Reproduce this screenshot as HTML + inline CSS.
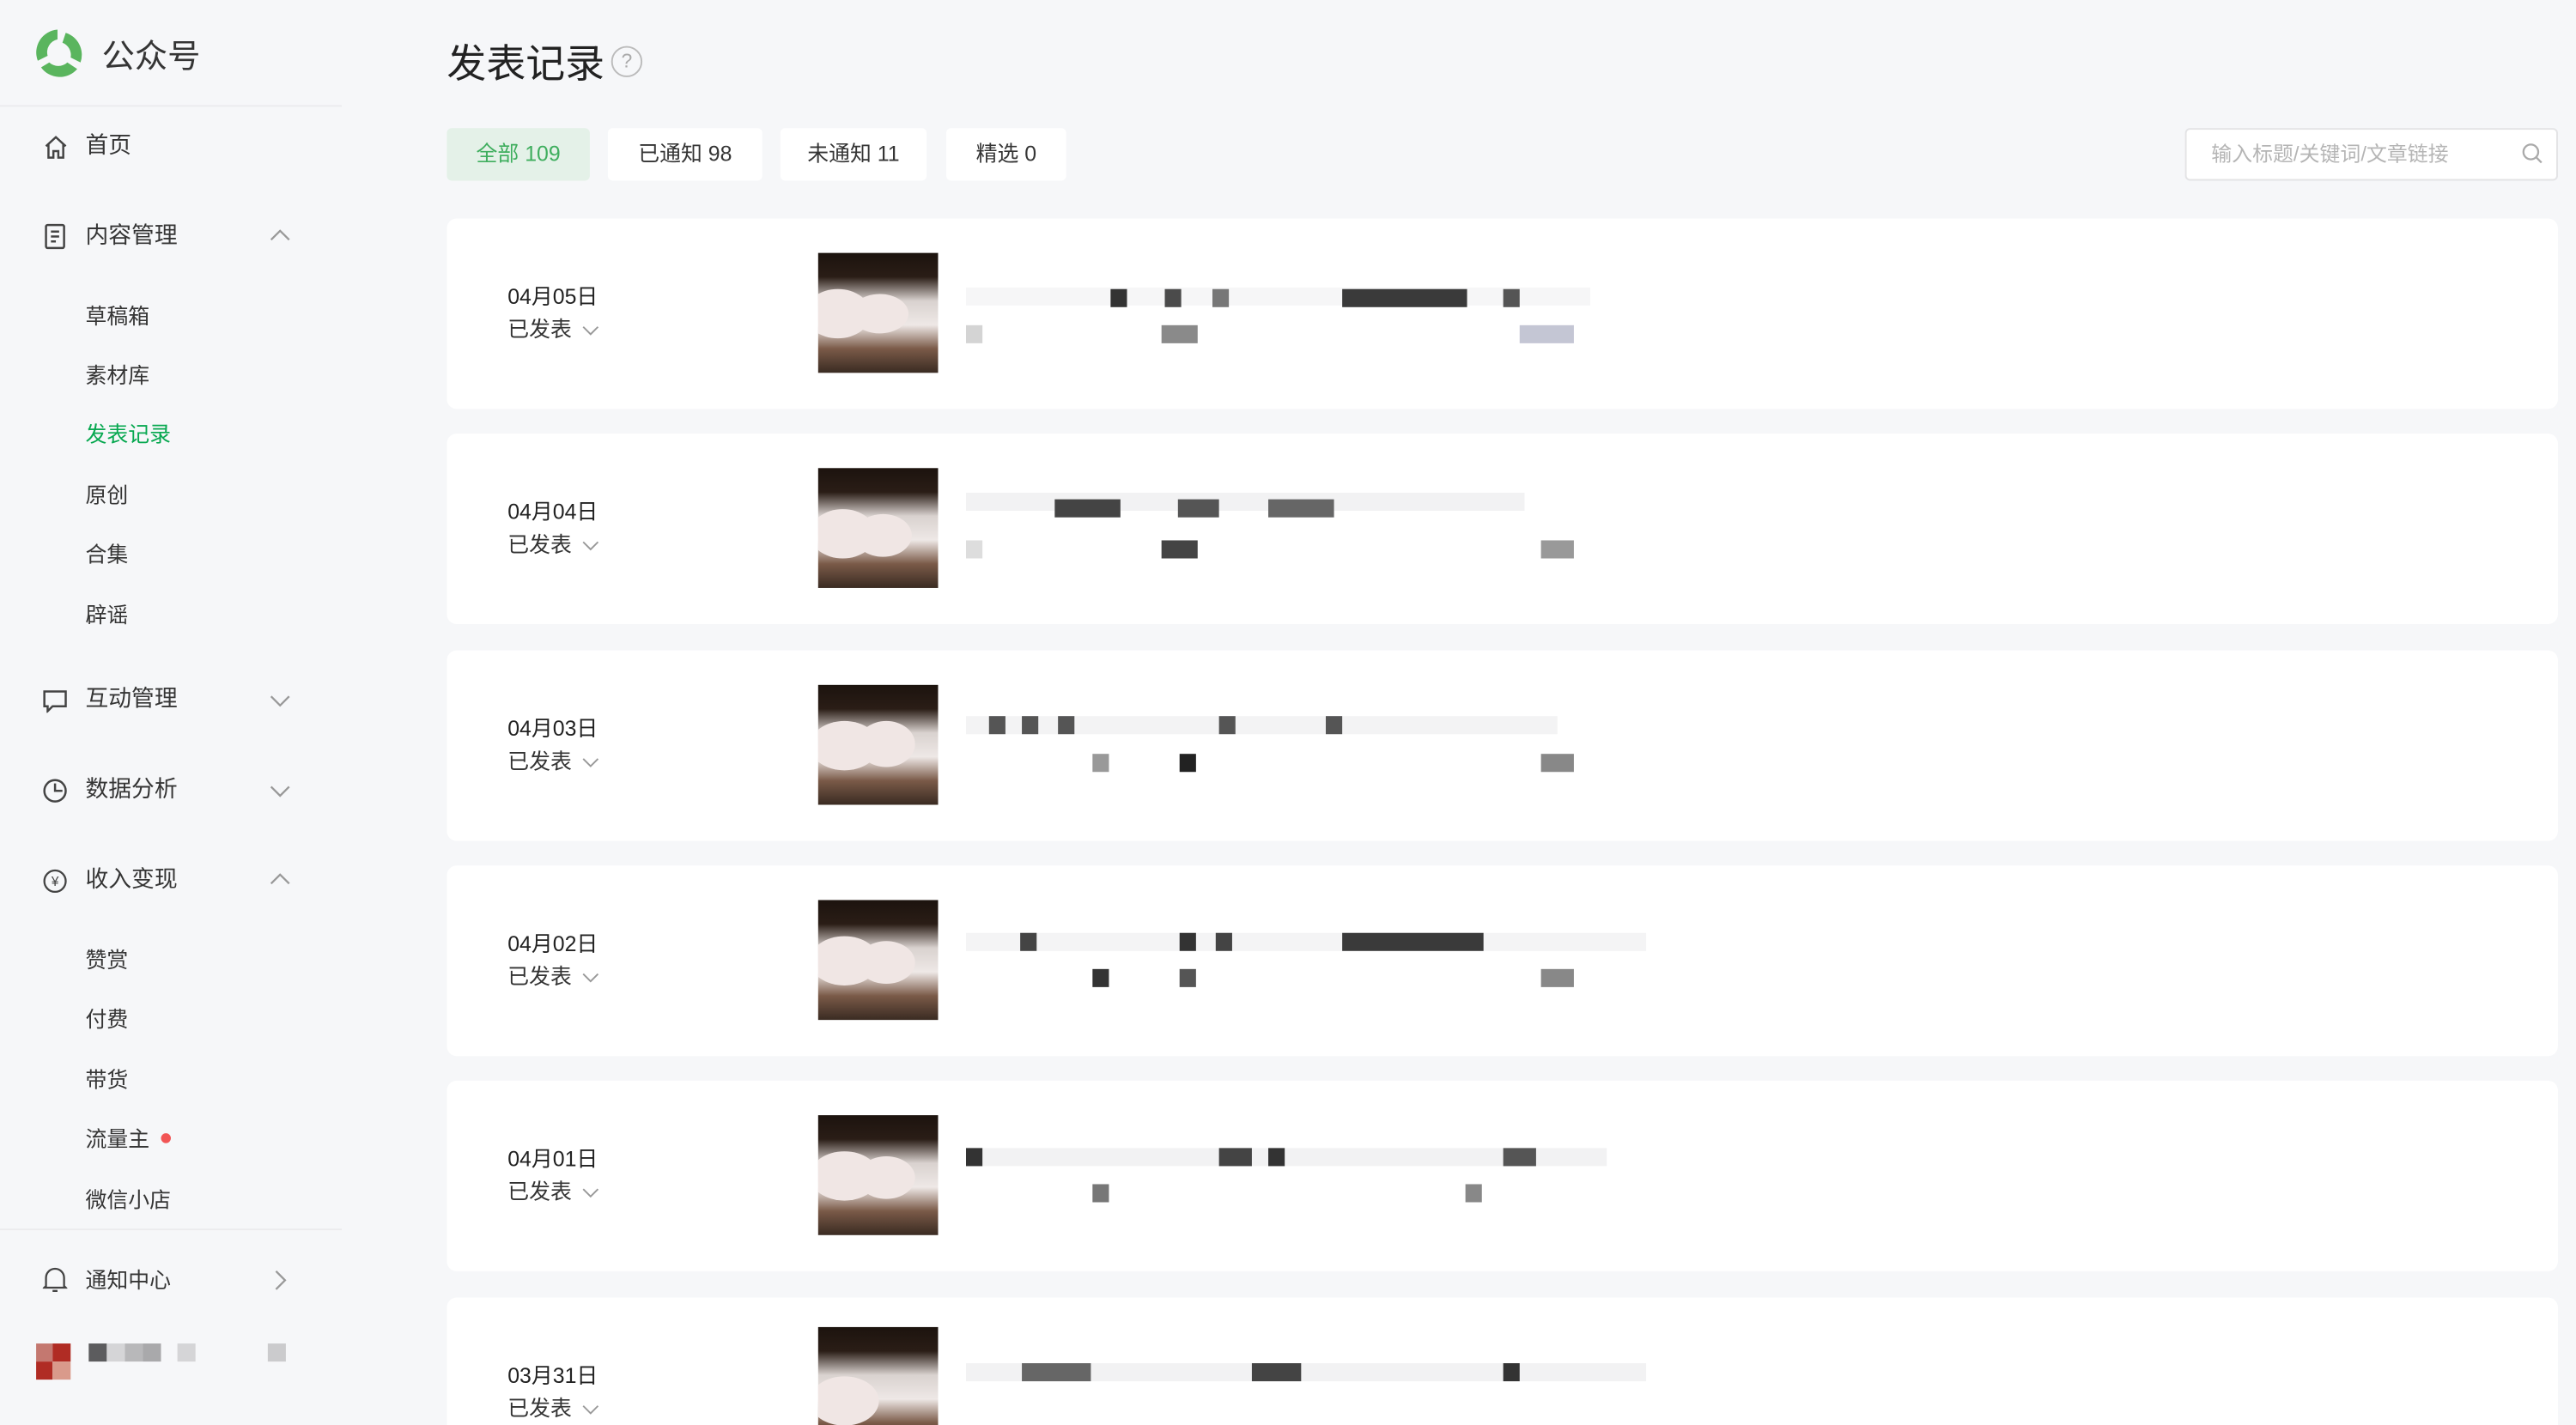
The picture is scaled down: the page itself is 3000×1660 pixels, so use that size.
<!DOCTYPE html>
<html><head><meta charset="utf-8">
<style>
*{margin:0;padding:0;box-sizing:border-box}
html,body{width:3000px;height:1660px;overflow:hidden;background:#f6f7f9}
#w{width:1568px;height:868px;transform:scale(1.91327);transform-origin:0 0;position:relative;font-family:"Liberation Sans","Noto Sans CJK SC",sans-serif;color:#333}
.a{position:absolute;white-space:nowrap}
.nav{font-size:14px;color:#353535;margin-top:-2px}
.sub{font-size:13px;color:#353535;margin-top:-2px}
.hr{position:absolute;left:0;width:208px;height:1px;background:#ececee}
.tab{position:absolute;top:78px;height:32px;line-height:32px;background:#fff;border-radius:3px;font-size:13px;text-align:center;color:#353535}
.card{position:absolute;left:272px;width:1285px;height:116px;background:#fff;border-radius:6px}
.date{position:absolute;left:37px;top:37px;font-size:13px;color:#222}
.st{position:absolute;left:37px;top:57px;font-size:13px;color:#333}
.st svg{vertical-align:middle;margin-left:6px}
.th{position:absolute;left:226px;top:21px;width:73px;height:73px;background:linear-gradient(180deg,#1c130e 0%,#2a1d16 20%,#d9d2cf 40%,#eee8e6 60%,#7a5a48 80%,#3a2b22 100%);overflow:hidden}
.th i{position:absolute;border-radius:50%;background:#f0e6e4}
.m{position:absolute;height:11px}
.card .m:first-of-type{background:#f9f9fa!important}
</style></head><body><div id="w">
<svg class="a" style="left:20px;top:17px" width="31" height="31" viewBox="0 0 31 31"><path d="M15 1 A14 14 0 0 0 3 20 L9 17 A8 8 0 0 1 15 7Z" fill="#5ab55e"/><path d="M20 3 A14 14 0 0 1 29 21 L23 18 A8 8 0 0 0 18 9Z" fill="#5ab55e"/><path d="M5 24 A14 14 0 0 0 27 25 L21 21 A8 8 0 0 1 10 21Z" fill="#5ab55e"/><circle cx="15.5" cy="15.5" r="6" fill="#f6f7f9"/></svg>
<div class="a" style="left:62px;top:18px;font-size:20px;color:#353535">公众号</div>
<div class="hr" style="top:64px"></div>
<svg class="a" style="left:26px;top:82px" width="16" height="15" viewBox="0 0 16 15" fill="none" stroke="#444" stroke-width="1.3"><path d="M2 7 L8 1.5 L14 7 M3.5 6 V14 H6.5 V10 H9.5 V14 H12.5 V6"/></svg>
<div class="a nav" style="left:52px;top:80px">首页</div>
<svg class="a" style="left:27px;top:136px" width="13" height="16" viewBox="0 0 13 16" fill="none" stroke="#444" stroke-width="1.3"><rect x="1" y="1" width="11" height="14" rx="1"/><path d="M4 5h5M4 8h5M4 11h3"/></svg>
<div class="a nav" style="left:52px;top:135px">内容管理</div>
<svg class="a" style="left:164px;top:139px" width="13" height="8" viewBox="0 0 13 8" fill="none" stroke="#999" stroke-width="1.2"><path d="M1 7 L6.5 1.5 L12 7"/></svg>
<div class="a sub" style="left:52px;top:184px">草稿箱</div>
<div class="a sub" style="left:52px;top:220px">素材库</div>
<div class="a sub" style="left:52px;top:256px;color:#07a850">发表记录</div>
<div class="a sub" style="left:52px;top:293px">原创</div>
<div class="a sub" style="left:52px;top:329px">合集</div>
<div class="a sub" style="left:52px;top:366px">辟谣</div>
<svg class="a" style="left:26px;top:420px" width="15" height="14" viewBox="0 0 15 14" fill="none" stroke="#444" stroke-width="1.3"><path d="M1 1h13v9H6l-3 3v-3H1z"/></svg>
<div class="a nav" style="left:52px;top:417px">互动管理</div>
<svg class="a" style="left:164px;top:423px" width="13" height="8" viewBox="0 0 13 8" fill="none" stroke="#999" stroke-width="1.2"><path d="M1 1 L6.5 6.5 L12 1"/></svg>
<svg class="a" style="left:26px;top:474px" width="15" height="15" viewBox="0 0 15 15" fill="none" stroke="#444" stroke-width="1.3"><circle cx="7.5" cy="7.5" r="6.5"/><path d="M7.5 3v4.5h4.5"/></svg>
<div class="a nav" style="left:52px;top:472px">数据分析</div>
<svg class="a" style="left:164px;top:478px" width="13" height="8" viewBox="0 0 13 8" fill="none" stroke="#999" stroke-width="1.2"><path d="M1 1 L6.5 6.5 L12 1"/></svg>
<svg class="a" style="left:26px;top:529px" width="15" height="15" viewBox="0 0 15 15" fill="none" stroke="#444" stroke-width="1.2"><circle cx="7.5" cy="7.5" r="6.5"/><text x="7.5" y="10.5" font-size="8" text-anchor="middle" fill="#444" stroke="none" font-family="Liberation Sans">¥</text></svg>
<div class="a nav" style="left:52px;top:527px">收入变现</div>
<svg class="a" style="left:164px;top:531px" width="13" height="8" viewBox="0 0 13 8" fill="none" stroke="#999" stroke-width="1.2"><path d="M1 7 L6.5 1.5 L12 7"/></svg>
<div class="a sub" style="left:52px;top:576px">赞赏</div>
<div class="a sub" style="left:52px;top:612px">付费</div>
<div class="a sub" style="left:52px;top:649px">带货</div>
<div class="a sub" style="left:52px;top:685px">流量主</div>
<div class="a" style="left:98px;top:690px;width:6px;height:6px;border-radius:50%;background:#f25555"></div>
<div class="a sub" style="left:52px;top:722px">微信小店</div>
<div class="hr" style="top:748px"></div>
<svg class="a" style="left:26px;top:771px" width="15" height="16" viewBox="0 0 15 16" fill="none" stroke="#444" stroke-width="1.2"><path d="M2 12 V7 A5.5 5.5 0 0 1 13 7 V12 L14 13 H1Z M6 15h3"/></svg>
<div class="a" style="left:52px;top:769px;font-size:13px;color:#353535">通知中心</div>
<svg class="a" style="left:167px;top:773px" width="8" height="13" viewBox="0 0 8 13" fill="none" stroke="#999" stroke-width="1.2"><path d="M1 1 L6.5 6.5 L1 12"/></svg>
<div class="a" style="left:22px;top:818px;width:10px;height:11px;background:#c47870"></div>
<div class="a" style="left:32px;top:818px;width:11px;height:11px;background:#b02c24"></div>
<div class="a" style="left:22px;top:829px;width:10px;height:11px;background:#b02c24"></div>
<div class="a" style="left:32px;top:829px;width:11px;height:11px;background:#d99a8b"></div>
<div class="a" style="left:54px;top:818px;width:11px;height:11px;background:#5c5c5e"></div>
<div class="a" style="left:65px;top:818px;width:11px;height:11px;background:#d5d5d7"></div>
<div class="a" style="left:76px;top:818px;width:11px;height:11px;background:#b8b8ba"></div>
<div class="a" style="left:87px;top:818px;width:11px;height:11px;background:#a9a9ab"></div>
<div class="a" style="left:108px;top:818px;width:11px;height:11px;background:#d5d5d7"></div>
<div class="a" style="left:163px;top:818px;width:11px;height:11px;background:#cbcbcd"></div>
<div class="a" style="left:272px;top:19px;font-size:24px;color:#222">发表记录</div>
<div class="a" style="left:372px;top:28px;width:19px;height:19px;border:1.2px solid #bbb;border-radius:50%;font-size:12px;color:#aaa;text-align:center;line-height:17px">?</div>
<div class="tab" style="left:272px;width:87px;background:#e4f1e8;color:#3fae5e">全部 109</div>
<div class="tab" style="left:370px;width:94px">已通知 98</div>
<div class="tab" style="left:475px;width:89px">未通知 11</div>
<div class="tab" style="left:576px;width:73px">精选 0</div>
<div class="a" style="left:1330px;top:78px;width:227px;height:32px;background:#fff;border:1px solid #e3e3e5;border-radius:3px;font-size:12.5px;color:#b5b5b5;line-height:30px;padding-left:15px">输入标题/关键词/文章链接</div>
<svg class="a" style="left:1535px;top:87px" width="13" height="13" viewBox="0 0 13 13" fill="none" stroke="#aaa" stroke-width="1.2"><circle cx="5.5" cy="5.5" r="4.5"/><path d="M9 9l3 3"/></svg>
<div class="card" style="top:133px"><div class="date">04月05日</div><div class="st">已发表<svg width="11" height="7" viewBox="0 0 11 7" fill="none" stroke="#999"><path d="M1 1l4.5 4.5L10 1"/></svg></div><div class="th"><i style="left:-8px;top:22px;width:40px;height:30px"></i><i style="left:20px;top:25px;width:35px;height:24px"></i></div>
<div class="m" style="left:316px;top:42px;width:380px;background:#f6f6f7"></div><div class="m" style="left:404px;top:43px;width:10px;background:#333"></div><div class="m" style="left:437px;top:43px;width:10px;background:#4b4b4b"></div><div class="m" style="left:466px;top:43px;width:10px;background:#777"></div><div class="m" style="left:545px;top:43px;width:76px;background:#3a3a3a"></div><div class="m" style="left:643px;top:43px;width:10px;background:#555"></div><div class="m" style="left:316px;top:65px;width:10px;background:#d4d4d4"></div><div class="m" style="left:435px;top:65px;width:22px;background:#8a8a8a"></div><div class="m" style="left:653px;top:65px;width:33px;background:#c4c6d4"></div></div>
<div class="card" style="top:264px"><div class="date">04月04日</div><div class="st">已发表<svg width="11" height="7" viewBox="0 0 11 7" fill="none" stroke="#999"><path d="M1 1l4.5 4.5L10 1"/></svg></div><div class="th"><i style="left:-5px;top:25px;width:40px;height:30px"></i><i style="left:22px;top:28px;width:35px;height:26px"></i></div>
<div class="m" style="left:316px;top:36px;width:340px;background:#f2f2f3"></div><div class="m" style="left:370px;top:40px;width:40px;background:#444"></div><div class="m" style="left:445px;top:40px;width:25px;background:#555"></div><div class="m" style="left:500px;top:40px;width:40px;background:#666"></div><div class="m" style="left:435px;top:65px;width:22px;background:#444"></div><div class="m" style="left:666px;top:65px;width:20px;background:#999"></div><div class="m" style="left:316px;top:65px;width:10px;background:#ddd"></div></div>
<div class="card" style="top:396px"><div class="date">04月03日</div><div class="st">已发表<svg width="11" height="7" viewBox="0 0 11 7" fill="none" stroke="#999"><path d="M1 1l4.5 4.5L10 1"/></svg></div><div class="th"><i style="left:-5px;top:22px;width:42px;height:30px"></i><i style="left:24px;top:22px;width:35px;height:28px"></i></div>
<div class="m" style="left:316px;top:40px;width:360px;background:#f3f3f4"></div><div class="m" style="left:330px;top:40px;width:10px;background:#555"></div><div class="m" style="left:350px;top:40px;width:10px;background:#555"></div><div class="m" style="left:372px;top:40px;width:10px;background:#555"></div><div class="m" style="left:470px;top:40px;width:10px;background:#555"></div><div class="m" style="left:535px;top:40px;width:10px;background:#555"></div><div class="m" style="left:446px;top:63px;width:10px;background:#222"></div><div class="m" style="left:393px;top:63px;width:10px;background:#999"></div><div class="m" style="left:666px;top:63px;width:20px;background:#888"></div></div>
<div class="card" style="top:527px"><div class="date">04月02日</div><div class="st">已发表<svg width="11" height="7" viewBox="0 0 11 7" fill="none" stroke="#999"><path d="M1 1l4.5 4.5L10 1"/></svg></div><div class="th"><i style="left:-5px;top:22px;width:42px;height:30px"></i><i style="left:24px;top:25px;width:35px;height:26px"></i></div>
<div class="m" style="left:316px;top:41px;width:414px;background:#f4f4f5"></div><div class="m" style="left:349px;top:41px;width:10px;background:#444"></div><div class="m" style="left:446px;top:41px;width:10px;background:#333"></div><div class="m" style="left:468px;top:41px;width:10px;background:#444"></div><div class="m" style="left:545px;top:41px;width:86px;background:#3a3a3a"></div><div class="m" style="left:393px;top:63px;width:10px;background:#333"></div><div class="m" style="left:446px;top:63px;width:10px;background:#555"></div><div class="m" style="left:666px;top:63px;width:20px;background:#888"></div></div>
<div class="card" style="top:658px"><div class="date">04月01日</div><div class="st">已发表<svg width="11" height="7" viewBox="0 0 11 7" fill="none" stroke="#999"><path d="M1 1l4.5 4.5L10 1"/></svg></div><div class="th"><i style="left:-5px;top:22px;width:42px;height:30px"></i><i style="left:24px;top:25px;width:35px;height:26px"></i></div>
<div class="m" style="left:316px;top:41px;width:390px;background:#f2f2f3"></div><div class="m" style="left:316px;top:41px;width:10px;background:#333"></div><div class="m" style="left:470px;top:41px;width:20px;background:#444"></div><div class="m" style="left:500px;top:41px;width:10px;background:#333"></div><div class="m" style="left:643px;top:41px;width:20px;background:#555"></div><div class="m" style="left:393px;top:63px;width:10px;background:#777"></div><div class="m" style="left:620px;top:63px;width:10px;background:#888"></div></div>
<div class="card" style="top:790px;height:90px"><div class="date">03月31日</div><div class="st">已发表<svg width="11" height="7" viewBox="0 0 11 7" fill="none" stroke="#999"><path d="M1 1l4.5 4.5L10 1"/></svg></div><div class="th" style="top:18px"><i style="left:-5px;top:30px;width:42px;height:30px"></i></div>
<div class="m" style="left:316px;top:40px;width:414px;background:#f2f2f3"></div><div class="m" style="left:350px;top:40px;width:42px;background:#666"></div><div class="m" style="left:490px;top:40px;width:30px;background:#444"></div><div class="m" style="left:643px;top:40px;width:10px;background:#333"></div></div>
</div></body></html>
